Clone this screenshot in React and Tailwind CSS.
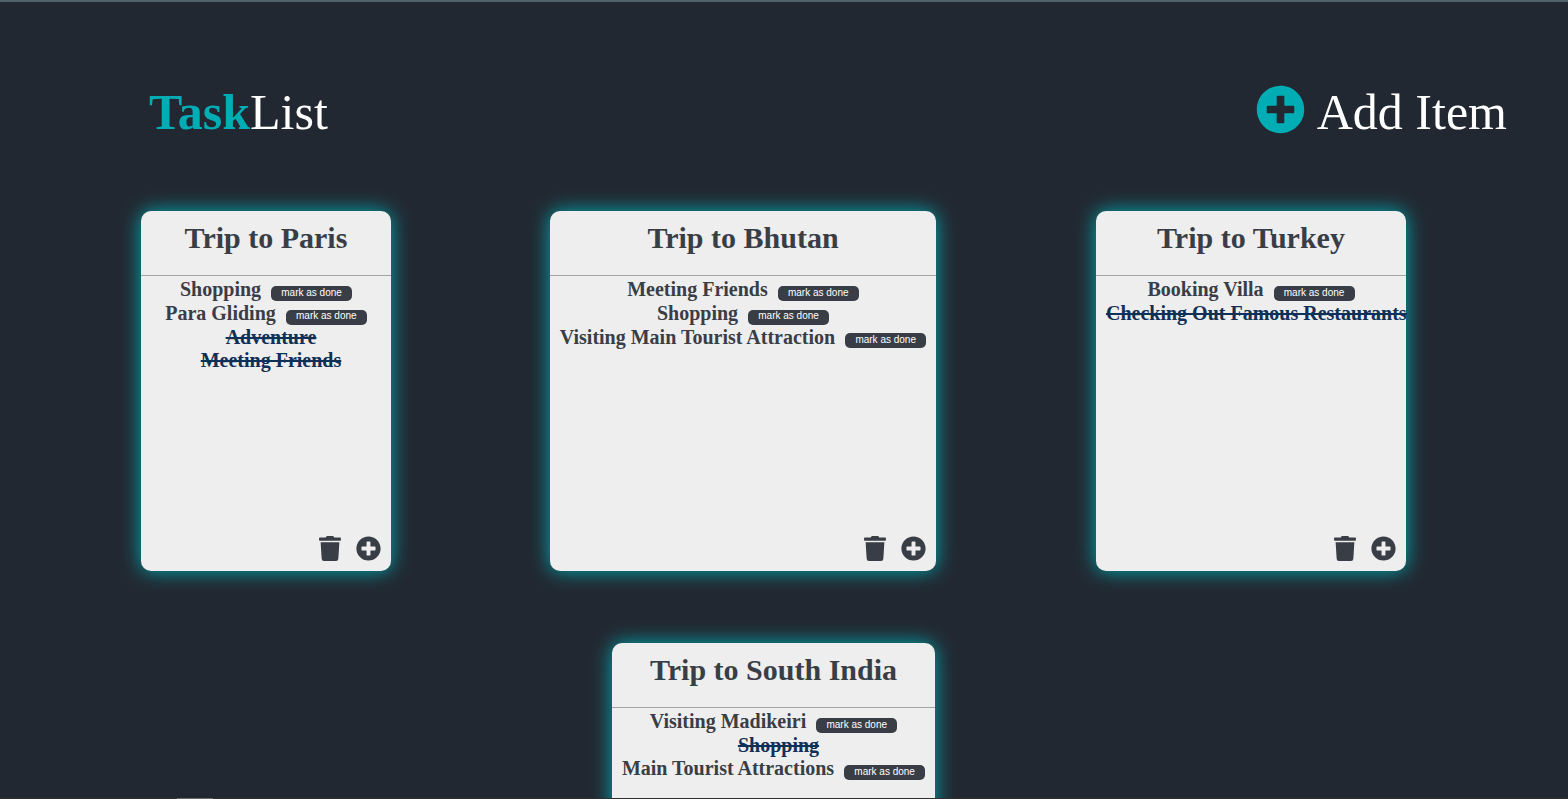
import { FaPlusCircle, FaTrash } from "react-icons/fa";

const lists = [
  {
    title: "Trip to Paris",
    width: "w-[250px]",
    items: [
      { text: "Shopping" },
      { text: "Para Gliding" },
      { text: "Adventure", done: true },
      { text: "Meeting Friends", done: true },
    ],
  },
  {
    title: "Trip to Bhutan",
    width: "w-[386px]",
    items: [
      { text: "Meeting Friends" },
      { text: "Shopping" },
      { text: "Visiting Main Tourist Attraction" },
    ],
  },
  {
    title: "Trip to Turkey",
    width: "w-[310px]",
    items: [
      { text: "Booking Villa" },
      { text: "Checking Out Famous Restaurants", done: true },
    ],
  },
];

const southIndia = {
  title: "Trip to South India",
  width: "w-[323px]",
  items: [
    { text: "Visiting Madikeiri" },
    { text: "Shopping", done: true },
    { text: "Main Tourist Attractions" },
  ],
};

function Item({ text, done }) {
  if (done) {
    return (
      <div className="h-[23.6px] whitespace-nowrap pl-[10px] text-[#0f3057] line-through">{text}</div>
    );
  }
  return (
    <div className="h-[23.6px] whitespace-nowrap text-[#393e46]">
      {text}
      <button className="relative top-[2px] ml-[10px] h-[15px] w-[81px] rounded-[5px] bg-[#393e46] pb-[3px] align-middle font-['Liberation_Sans',sans-serif] text-[10px] font-normal leading-[11px] text-white">
        mark as done
      </button>
    </div>
  );
}

function Card({ list }) {
  return (
    <div className={`${list.width} flex h-[360px] shrink-0 flex-col rounded-[10px] bg-[#eeeeee] shadow-[0_0_20px_#00adb5]`}>
      <h2 className="h-[65px] shrink-0 border-b border-[#a3a3a3] pt-[8px] text-center text-[30px] font-bold leading-[38px] text-[#393e46]">
        {list.title}
      </h2>
      <div className="flex-1 pt-[2.4px] text-center text-[20px] font-bold leading-[23px]">
        {list.items.map((item) => (
          <Item key={item.text} {...item} />
        ))}
      </div>
      <div className="flex items-center justify-end gap-[15px] pb-[10px] pr-[10px] text-[#393e46]">
        <FaTrash className="h-[25px] w-[22px]" />
        <FaPlusCircle size={25} />
      </div>
    </div>
  );
}

export default function App() {
  return (
    <div className="relative h-[799px] overflow-hidden border-t-2 border-[#51616c] bg-[#222831] font-['Liberation_Serif',serif]">
      <header className="flex h-[209px] items-start justify-between pl-[149px] pr-[61px] pt-[81px]">
        <h1 className="text-[50px] leading-[58px] text-white">
          <span className="font-bold text-[#00adb5]">Task</span>List
        </h1>
        <div className="flex gap-[12px] text-[50px] leading-[58px] text-white">
          <FaPlusCircle size={49} className="mt-[2px] text-[#00adb5]" />
          Add Item
        </div>
      </header>
      <div className="flex gap-[159px] pl-[141px]">
        <Card list={lists[0]} />
        <Card list={lists[1]} />
        <div className="ml-px">
          <Card list={lists[2]} />
        </div>
      </div>
      <div className="mt-[71.8px] pl-[612px]">
        <Card list={southIndia} />
      </div>
      <div className="absolute inset-x-0 bottom-0 h-px bg-[#2f2f2f]">
        <div className="ml-[177px] h-px w-[36px] bg-[#6a6a6a]" />
      </div>
    </div>
  );
}
